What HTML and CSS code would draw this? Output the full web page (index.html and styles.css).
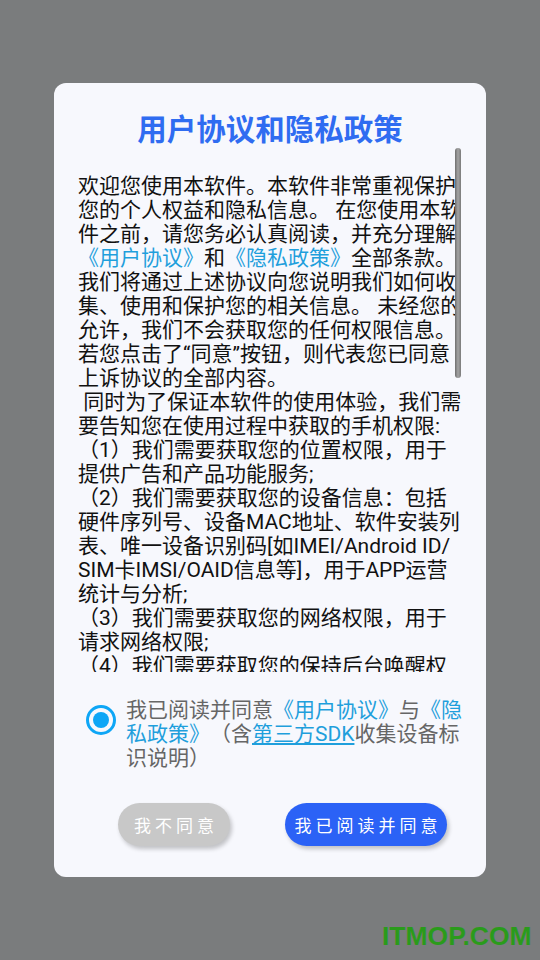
FILE: index.html
```html
<!DOCTYPE html>
<html lang="zh-CN">
<head>
<meta charset="utf-8">
<title>用户协议和隐私政策</title>
<link rel="stylesheet" href="styles.css">
</head>
<body>
<div class="screen">
  <div class="dialog">
    <h1 class="title">用户协议和隐私政策</h1>
    <div class="scroll">
      <div class="thumb"></div>
      <p class="body">欢迎您使用本软件。本软件非常重视保护<br>您的个人权益和隐私信息。 在您使用本软<br>件之前，请您务必认真阅读，并充分理解<br><span class="link">《用户协议》</span>和<span class="link">《隐私政策》</span>全部条款。<br>我们将通过上述协议向您说明我们如何收<br>集、使用和保护您的相关信息。 未经您的<br>允许，我们不会获取您的任何权限信息。<br>若您点击了“同意”按钮，则代表您已同意<br>上诉协议的全部内容。<br>&nbsp;同时为了保证本软件的使用体验，我们需<br>要告知您在使用过程中获取的手机权限:<br>（1）我们需要获取您的位置权限，用于<br>提供广告和产品功能服务;<br>（2）我们需要获取您的设备信息：包括<br>硬件序列号、设备MAC地址、软件安装列<br>表、唯一设备识别码[如IMEI/Android ID/<br>SIM卡IMSI/OAID信息等]，用于APP运营<br>统计与分析;<br>（3）我们需要获取您的网络权限，用于<br>请求网络权限;<br>（4）我们需要获取您的保持后台唤醒权<br>限，用于保证消息的及时送达;</p>
    </div>
    <div class="agree">
      <span class="radio"><span class="dot"></span></span>
      <p class="agree-text">我已阅读并同意<span class="link">《用户协议》</span>与<span class="link">《隐<br>私政策》</span>（含<span class="link under">第三方SDK</span>收集设备标<br>识说明）</p>
    </div>
    <div class="buttons">
      <button class="btn btn-no">我不同意</button>
      <button class="btn btn-yes">我已阅读并同意</button>
    </div>
  </div>
  <div class="watermark">ITMOP.COM</div>
</div>
</body>
</html>
```
FILE: styles.css
```css
html, body {
  margin: 0;
  padding: 0;
}
body {
  background: #7a7c7d;
  font-family: Roboto, "Noto Sans CJK SC", sans-serif;
  text-spacing-trim: space-all;
}
.screen {
  position: relative;
  width: 540px;
  height: 960px;
  padding-top: 83px;
  box-sizing: border-box;
}
.dialog {
  margin-left: 54px;
  width: 432px;
  height: 794px;
  background: #f7f8fd;
  border-radius: 12px;
  display: flex;
  flex-direction: column;
  box-sizing: border-box;
}
.title {
  margin: 0;
  padding-top: 26px;
  font-size: 29.5px;
  line-height: 36px;
  font-weight: bold;
  color: #2f6cf1;
  text-align: center;
  font-family: "Noto Sans CJK SC", sans-serif;
}
.scroll {
  position: relative;
  margin-top: 3px;
  margin-left: 24px;
  height: 524px;
  overflow: hidden;
}
.thumb {
  position: absolute;
  left: 377px;
  top: 0;
  width: 6px;
  height: 230px;
  border-radius: 3px;
  background: linear-gradient(to right, #6e6e6e, #a4a4a4 50%, #7a7a7a);
}
.body {
  margin: 0;
  padding-top: 26px;
  font-size: 21px;
  line-height: 24px;
  color: #111;
  white-space: nowrap;
}
.link {
  color: #1f9fdc;
}
.under {
  text-decoration: underline;
}
.agree {
  display: flex;
  align-items: flex-start;
  margin-top: 26px;
  padding-left: 32px;
  gap: 10px;
}
.radio {
  margin-top: 7px;
  width: 30px;
  height: 30px;
  box-sizing: border-box;
  border: 3px solid #0ea6f6;
  border-radius: 50%;
  display: flex;
  align-items: center;
  justify-content: center;
  flex: none;
}
.dot {
  width: 16px;
  height: 16px;
  border-radius: 50%;
  background: #0ea6f6;
}
.agree-text {
  margin: 0;
  font-size: 21px;
  line-height: 24px;
  color: #666;
  white-space: nowrap;
}
.buttons {
  display: flex;
  margin-top: 33px;
  padding-left: 64px;
  gap: 55px;
}
.btn {
  border: none;
  height: 43px;
  border-radius: 22px;
  color: #fff;
  font-size: 17px;
  letter-spacing: 4px;
  text-indent: 4px;
  font-family: "Noto Sans CJK SC", sans-serif;
  padding: 0;
  box-shadow: 2px 3px 4px rgba(0, 0, 0, 0.22);
}
.btn-no {
  width: 112px;
  background: #c8c8c8;
}
.btn-yes {
  width: 162px;
  background: #2b62f6;
}
.watermark {
  position: absolute;
  left: 382px;
  top: 921px;
  font-family: "Liberation Sans", sans-serif;
  font-weight: bold;
  font-size: 26.5px;
  line-height: 30px;
  color: #2a9b1b;
}
```
